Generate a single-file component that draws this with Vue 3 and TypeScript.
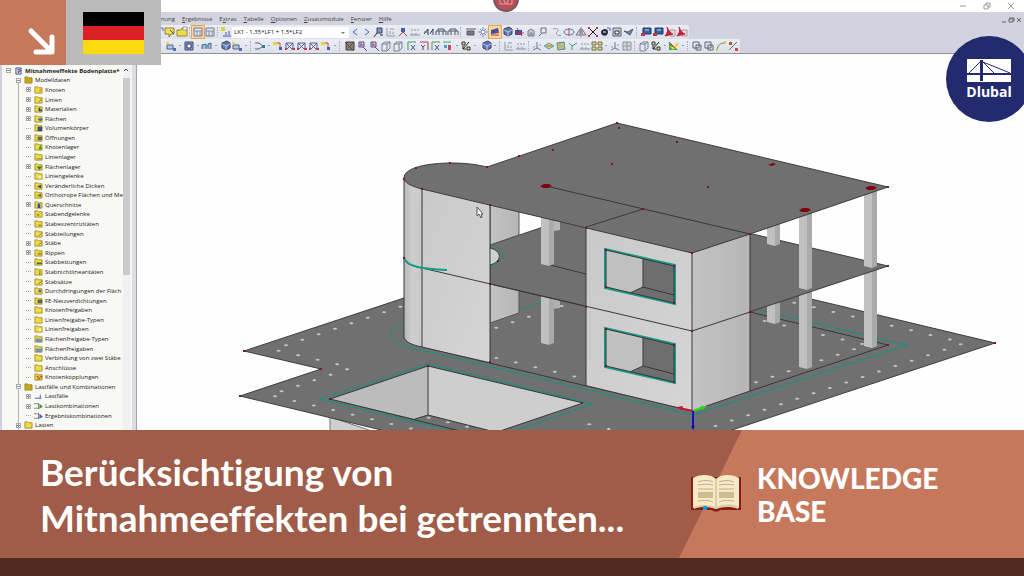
<script setup lang="ts">
interface Shape { d: string; f?: string; s?: string }
interface Tool { kind: 'icon' | 'drop' | 'gap' | 'combo'; name?: string; on?: boolean; size?: string }
interface TreeRow { text: string; level: number; toggle?: string; icon: string; mark?: string; markColor?: string }
interface Pt { x: number; y: number }

const navy = '#3a4a7c'
const glyphs: Record<string, Shape[]> = {
  note: [{ d: 'M1 2h9v6H7l-2 3V8H1z', f: '#f3e05a', s: '#8b8330' }, { d: 'M6 4l4 4', s: '#555' }],
  folder: [{ d: 'M1 4h4l1-2h5v8H1z', f: '#eedb4e', s: '#978831' }, { d: 'M7 1h4v3H7z', f: '#fff', s: '#999' }],
  table: [{ d: 'M2 2h8v8H2z', f: '#dfe3ee', s: '#71788c' }, { d: 'M2 5h8M5 5v5M8 5v5', s: '#8a91a3' }],
  load: [{ d: 'M1 1h4v4H1z', f: '#d9d33c' }, { d: 'M3 10h8M6 6v3M9 5v4', s: '#4a5a96' }],
  prev: [{ d: 'M8 3L4 6l4 3', s: '#3866b8' }],
  next: [{ d: 'M4 3l4 3-4 3', s: '#3866b8' }],
  lens: [{ d: 'M4 2h5v5H4z', f: '#8592bd', s: '#3c4568' }, { d: 'M4 7l-3 4M7 9h3', s: '#333' }],
  dim: [{ d: 'M2 2v8h8M5 8V5M8 8V6M5 3h4', s: '#9298a8' }],
  person: [{ d: 'M4 2h4v4H4z', f: '#4b5ba0' }, { d: 'M2 10l4-4 4 4', s: '#a53d52' }],
  values: [{ d: 'M1 9h10M2 4h2M5 4h2M8 4h2M3 7v2M7 7v2', s: '#8d93a4' }],
  pair: [{ d: 'M1 8l4-5v6M7 8l3-5v6', s: '#333f55' }, { d: 'M1 6h4', s: '#487b57' }],
  frame: [{ d: 'M1 9V5h10v4M3 5V3h6v2M4 5v4M8 5v4', s: '#4e5669' }],
  texture: [{ d: 'M2 2h8v8H2z', f: '#8b8072', s: '#3d3a3a' }, { d: 'M1 2l9 9M10 2l-6 6', s: '#5c4b44' }],
  flag: [{ d: 'M1 3h10M2 5h7v4H2z', f: '#777', s: '#585d68' }],
  gear: [{ d: 'M6 1v10M1 6h10M3 3l6 6M9 3l-6 6', s: '#7984b5' }, { d: 'M5 5h2v2H5z', f: '#fff' }],
  red: [{ d: 'M2 4l7-2 1 5-8 1z', f: '#394f9c' }, { d: 'M2 9h8', s: '#ca3445' }, { d: 'M5 3l4 4', s: '#d0394a' }],
  cube: [{ d: 'M3 3l5-2 3 2v5l-4 2-4-2z', f: '#6177ad', s: '#34415f' }, { d: 'M3 4l4 2 4-2M7 6v4', s: '#b8c8e6' }],
  cross: [{ d: 'M2 4h7v5H2z', f: '#3953a5' }, { d: 'M4 2l5 8M3 7h8', s: '#c22c41' }],
  house: [{ d: 'M3 10V5l3-2 3 2v5zM5 10V7h2v3', f: '#c6c9d2', s: '#777c89' }],
  search: [{ d: 'M4 2h5v5H4zM5 7l-3 3', f: '#e5e8ef', s: '#687187' }],
  link: [{ d: 'M2 3c5-2 6 2 4 3s1 5 4 3', s: '#8b93a2' }],
  orbit: [{ d: 'M1 6c1-4 9-4 10 0-1 4-9 4-10 0', s: '#5e6bad' }, { d: 'M6 2v8', s: '#bc4c61' }],
  tri: [{ d: 'M1 9l4-6v6zM7 9V3l4 6z', f: '#d6d8df', s: '#727987' }, { d: 'M6 1v10', s: '#a66' }],
  cut: [{ d: 'M2 2l8 8M10 2l-8 8', s: '#222' }, { d: 'M1 1h2v2H1zM9 1h2v2H9zM1 9h2v2H1zM9 9h2v2H9z', f: '#d02d47' }],
  disc: [{ d: 'M2 6c0-3 7-5 7 0s-7 5-7 0', f: '#20283c' }, { d: 'M4 6h3', s: '#fff' }, { d: 'M8 2h3v3', s: '#5061b5' }],
  ring: [{ d: 'M2 2h8v8H2z', f: '#ccd1dd', s: '#59606f' }, { d: 'M4 5h4v3H4z', f: '#fff', s: '#252c3b' }],
  wing: [{ d: 'M1 5l4 1 5-3-3 6-3-2z', f: '#7288b9', s: '#485978' }],
  screen: [{ d: 'M3 2h8v6H3z', f: '#335e98', s: '#1d3d6f' }, { d: 'M1 7h4v3H1z', f: '#c83246' }, { d: 'M5 4h4', s: '#cfe2f8' }],
  pdf: [{ d: 'M6 4h5v6H6z', f: '#eadfe2', s: '#b48b92' }, { d: 'M1 10c3-4 3-6 2-9 2 4 3 6 6 7z', f: '#bf2438', s: '#bf2438' }],
  axis: [{ d: 'M6 2v6l4 2M6 8l-4 2', s: '#6b7894' }, { d: 'M2 7h2M8 5h2', s: '#93a3c6' }],
  greenaxis: [{ d: 'M2 2v8M2 2h8', s: '#36a152' }, { d: 'M5 5l4 5M9 5l-4 5', s: '#44518f' }],
  redaxis: [{ d: 'M2 2h8v8', s: '#c73449' }, { d: 'M3 5l2 2v3M7 5l-2 2', s: '#44518f' }],
  truss: [{ d: 'M2 10V3l7 7V3L2 10M2 3h7', s: '#556094' }, { d: 'M1 8h2v2H1zM8 8h3v2H8z', f: '#b44455' }],
  node: [{ d: 'M2 5h6v4H2z', f: '#b9c7df', s: '#506083' }, { d: 'M1 2h3v2H1z', f: '#dfda4c' }, { d: 'M8 8h3v3H8z', f: '#516ab2' }],
  window: [{ d: 'M2 2h8v8H2z', f: '#8c9bcc', s: '#3f4a72' }, { d: 'M4 4h4v4H4z', f: '#fff', s: '#26346e' }],
  member: [{ d: 'M1 9V5l4-1v5M7 9V4l3-1v6', f: '#a7bfd6', s: '#4a6485' }, { d: 'M5 5h2v2H5z', f: '#4ea6ac' }],
  branch: [{ d: 'M1 3h4l4 3-4 3H1', s: '#54657f' }, { d: 'M8 5h3v3H8z', f: '#3d7a98' }],
  pin: [{ d: 'M3 3h5v6', s: '#c54052' }, { d: 'M1 2h4v3H1z', f: '#e0d537' }, { d: 'M7 7h3v3H7z', f: '#4d5fa8' }],
  zoom: [{ d: 'M3 2h5v5H3zM7 7l4 4', f: '#d5d9ed', s: '#495789' }, { d: 'M5 2v4M4 5h4', s: '#c83b4d' }],
  box: [{ d: 'M2 4l3-2h5v6l-3 3H2zM2 4h5v6M7 4l3-2', f: '#e5e8ee', s: '#7b8191' }],
  multi: [{ d: 'M1 2h8', s: '#45a75d' }, { d: 'M2 5h3v3H2z', f: '#48a1c0' }, { d: 'M6 5h3v5H6z', f: '#c44b5d' }],
  arrows: [{ d: 'M2 2h3v3H2zM7 7h3v3H7z', f: '#e3df72', s: '#333' }, { d: 'M9 2L3 9M3 6v3h3', s: '#222' }],
  mesh: [{ d: 'M2 3l7-1 1 7-7 1z', f: '#a2c9b2', s: '#538a70' }, { d: 'M5 3v7M2 6h8', s: '#e0a44c' }],
  grid: [{ d: 'M1 2h4v3H1zM7 2h4v3H7zM1 7h4v3H1zM7 7h4v3H7z', f: '#e4df81', s: '#6e6d45' }],
  greygrid: [{ d: 'M2 2h8v8H2zM2 6h8M6 2v8', f: '#d3d8df', s: '#9098a3' }],
  rainbow: [{ d: 'M1 6l5-3 5 3-5 3z', f: '#d8d56a', s: '#4aa7c4' }, { d: 'M3 6h6', s: '#cf6b4a' }],
  fork: [{ d: 'M5 10V5M2 3l3 3 5-3', s: '#4e9a6b' }],
  result: [{ d: 'M1 2l9 8H1z', f: '#39a449' }, { d: 'M1 6l4 1 5-5 1 2-6 6z', f: '#e4d838' }, { d: 'M1 2l6 6', s: '#ce2a3c' }],
  copy: [{ d: 'M2 2h6v6H2zM5 5h5v5H5z', f: '#e2e4ec', s: '#5d6577' }],
  curve: [{ d: 'M2 10c1-5 3-7 8-7', s: '#6a823b' }, { d: 'M1 9h2v2H1zM9 1h2v2H9z', f: '#c4d435' }],
  percent: [{ d: 'M2 10l8-8', s: '#3f8056' }, { d: 'M2 2h3v3H2zM8 8h3v3H8z', f: '#cc4b43' }],
}

const gap = (size: string): Tool => ({ kind: 'gap', size })
function icons(list: string): Tool[] {
  return list.split(' ').map((n) => {
    if (n === 'v') return { kind: 'drop' }
    return n.endsWith('!') ? { kind: 'icon', name: n.slice(0, -1), on: true } : { kind: 'icon', name: n }
  })
}
const barOne: Tool[] = [
  ...icons('disc note folder'), gap('s'), ...icons('table! table'), gap('s'), ...icons('load'),
  { kind: 'combo' }, ...icons('prev next lens dim person values'), gap('xs'), ...icons('pair frame frame'), gap('l'),
  ...icons('flag gear red! cube cross house search'), gap('xs'), ...icons('link orbit tri cut disc ring wing'), gap('m'),
  ...icons('screen screen pdf pdf'),
]
const barTwo: Tool[] = [
  ...icons('node v window v member v cube node v'), gap('m'),
  ...icons('branch v pin truss truss truss pin v'), gap('l'),
  ...icons('texture zoom zoom box box'), gap('xs'), ...icons('greenaxis redaxis greenaxis multi v arrows v'), gap('xs'),
  ...icons('cube v'), gap('m'), ...icons('dim values'), gap('s'),
  ...icons('axis rainbow mesh fork values grid v axis greygrid'), gap('m'), ...icons('box arrows v result v'), gap('m'),
  ...icons('copy copy curve percent'),
]
const bars = [barOne, barTwo]
const menus = ['Berechnung', 'Ergebnisse', 'Extras', 'Tabelle', 'Optionen', 'Zusatzmodule', 'Fenster', 'Hilfe']
const accel: Record<string, number> = { Ergebnisse: 0, Extras: 1, Tabelle: 0, Optionen: 0, Zusatzmodule: 0, Fenster: 0, Hilfe: 0, Berechnung: 0 }

const leaf = (text: string, toggle = '', mark = '', markColor = navy): TreeRow => ({ text, level: 2, toggle, icon: 'folder', mark, markColor })
const tree: TreeRow[] = [
  { text: 'Mitnahmeeffekte Bodenplatte*', level: 0, toggle: '-', icon: 'model' },
  { text: 'Modelldaten', level: 1, toggle: '-', icon: 'full' },
  leaf('Knoten', '+', 'M6 4h2v2H6z', '#c9892c'), leaf('Linien', '+', 'M5 7l4-4', '#8a6a20'),
  leaf('Materialien', '+', 'M5 3h2v2h2v2H5z'), leaf('Flächen', '+', 'M4 5l3-2 3 2-3 2z', '#4d6ea5'),
  leaf('Volumenkörper', '', 'M4 3h5v5H4z'), leaf('Öffnungen', '+', 'M4 3h5v4H4z', '#686a58'),
  leaf('Knotenlager', '', 'M5 7l2-5 2 5z', '#2f9746'), leaf('Linienlager', '', 'M3 6h6v1H3z', '#768846'),
  leaf('Flächenlager', '+', 'M3 4h6L6 8z', '#297a3f'), leaf('Liniengelenke', '', 'M5 4h3v3H5z', '#f5efb0'),
  leaf('Veränderliche Dicken', '', 'M3 5l5-2v4z'), leaf('Orthotrope Flächen und Me', '', 'M3 5l5-2v4z', '#6d743d'),
  leaf('Querschnitte', '+', 'M4 3h3v5H4z', '#334da6'), leaf('Stabendgelenke', '', 'M3 5h3v1H3z', '#445'),
  leaf('Stabexzentrizitäten', '', 'M5 5h3v2H5z', '#a4902e'), leaf('Stabteilungen', '', 'M5 7l4-4', '#867025'),
  leaf('Stäbe', '+', 'M5 7l4-4', '#867025'), leaf('Rippen', '+', 'M4 4h5v3H4z', '#b19b35'),
  leaf('Stabbettungen', '', 'M3 5h6v2H3z', '#38753d'), leaf('Stabnichtlinearitäten', '', 'M6 3h1v5H6z', '#75651f'),
  leaf('Stabsätze', '', 'M5 7l4-4', '#75651f'), leaf('Durchdringungen der Fläch', '', 'M5 3h3v3H5z', '#506bad'),
  leaf('FE-Netzverdichtungen', '', 'M4 3h5v4H4z', '#52655c'), leaf('Knotenfreigaben'), leaf('Linienfreigabe-Typen'),
  leaf('Linienfreigaben', '', 'M5 4h3v3H5z', '#f5efb0'), leaf('Flächenfreigabe-Typen', '', 'M2 4h7v4H2z', '#6f94b5'),
  leaf('Flächenfreigaben', '', 'M2 4h7v4H2z', '#6f94b5'), leaf('Verbindung von zwei Stäbe'), leaf('Anschlüsse'),
  leaf('Knotenkopplungen', '', 'M3 3h2v2H3zM7 3h2v2H7zM5 5h2v2H5zM3 7h2v1H3z', '#c13f2d'),
  { text: 'Lastfälle und Kombinationen', level: 1, toggle: '-', icon: 'full' },
  { text: 'Lastfälle', level: 2, toggle: '+', icon: 'case' },
  { text: 'Lastkombinationen', level: 2, toggle: '+', icon: 'combi', markColor: '#2d9b44' },
  { text: 'Ergebniskombinationen', level: 2, icon: 'combi', markColor: '#4a61b5' },
  { text: 'Lasten', level: 1, toggle: '+', icon: 'folder' },
]

function row(x: number, y: number, dx: number, dy: number, n: number): Pt[] {
  return Array.from({ length: n }, (_, i) => ({ x: x + i * dx, y: y + i * dy }))
}
const marks: Pt[] = [
  ...row(286, 345.3, 16.35, -5.5, 8), ...row(278.7, 350.7, 19.45, 4.55, 4), ...row(347, 369.3, -16.35, 5.5, 5),
  ...row(275, 396.3, 19.4, 4.6, 8), ...row(496.3, 327.7, 16.3, -5.5, 3), ...row(561.7, 306, 16, -5, 1),
  ...row(496.3, 358, 19.5, 4.6, 5), ...row(794.3, 302.7, 19.5, 4.6, 4), ...row(891.7, 325.7, 19.4, 4.6, 4),
  ...row(960.7, 344.3, -16.35, 5.45, 16), ...row(764.7, 321, 19.4, 4.6, 2), ...row(823, 335, 19.5, 4.5, 3),
  ...row(854, 349.3, -16.3, 5.5, 3), ...row(788.7, 371.3, -16.3, 5.5, 3), ...row(589.3, 424.3, 19.3, 4.6, 2),
]
const pitMarks: Pt[] = row(428.7, 417.7, 19.2, 4.5, 3)
const nodes: Pt[] = [
  [617, 123], [619, 128], [677, 142], [553, 150], [519, 156], [612, 164], [708, 187], [450, 163], [416, 168], [404, 179],
  [487, 167], [422, 189], [490, 205], [586, 228], [643, 209], [692, 253], [750, 234], [888, 187], [888, 266], [888, 345],
  [995, 343], [244, 351], [321, 369], [240, 396], [490, 284], [490, 362], [586, 307], [692, 331], [750, 312], [404, 258],
  [606, 250], [674, 266], [606, 287], [674, 303], [606, 329], [674, 345], [606, 366], [674, 382], [330, 399], [428, 366], [582, 403], [498, 261],
].map(([x, y]) => ({ x: x!, y: y! }))
const supports: Pt[] = [{ x: 546, y: 186 }, { x: 871, y: 188 }, { x: 805, y: 210 }]
const lowerColumns = [[541, 270, 344], [767, 270, 323], [799, 270, 368], [864, 262, 347]]
const upperColumns = [[541, 200, 265], [767, 205, 245], [799, 205, 289], [864, 186, 267]]
</script>

<template>
  <main class="slide">
    <section class="app">
      <header class="titlebar">
        <button type="button" aria-label="Minimieren"><svg viewBox="0 0 8 8"><path d="M1 4h6" /></svg></button>
        <button type="button" aria-label="Verkleinern"><svg viewBox="0 0 8 8"><path d="M1 3h4v4H1zM3 3V1h4v4H5" /></svg></button>
        <button type="button" aria-label="Schließen"><svg viewBox="0 0 8 8"><path d="M1 1l6 6M7 1L1 7" /></svg></button>
      </header>
      <nav class="menubar">
        <button v-for="m in menus" :key="m" type="button">{{ m.slice(0, accel[m]) }}<u>{{ m.charAt(accel[m]!) }}</u>{{ m.slice(accel[m]! + 1) }}</button>
        <svg class="mdi" viewBox="0 0 22 8"><path d="M1 6h4M8 3h4v3H8zM8 2h5v3M16 2l4 4M20 2l-4 4" /></svg>
      </nav>
      <div class="bars">
        <div v-for="(bar, b) in bars" :key="b" class="bar" :class="{ second: b === 1 }">
          <template v-for="(t, i) in bar" :key="i">
            <button v-if="t.kind === 'icon'" type="button" class="tool" :class="{ on: t.on }" :aria-label="t.name">
              <svg viewBox="0 0 12 12"><path v-for="(s, k) in glyphs[t.name!]" :key="k" :d="s.d" :fill="s.f || 'none'" :stroke="s.s || 'none'" /></svg>
            </button>
            <span v-else-if="t.kind === 'drop'" class="drop"></span>
            <span v-else-if="t.kind === 'gap'" class="gap" :class="t.size"></span>
            <label v-else class="combo">
              <select aria-label="Lastkombination"><option>LK1 - 1.35*LF1 + 1.5*LF2</option></select>
            </label>
          </template>
        </div>
      </div>

      <div class="work">
        <aside class="tree">
          <ul>
            <li v-for="(r, i) in tree" :key="i" :class="'l' + r.level">
              <button v-if="r.toggle" type="button" class="toggle" :aria-label="r.text">
                <svg viewBox="0 0 5 5"><path d="M1 2h3v1H1z" /><path v-if="r.toggle === '+'" d="M2 1h1v3H2z" /></svg>
              </button>
              <span v-else class="stub"></span>
              <svg class="ico" viewBox="0 0 10 9">
                <template v-if="r.icon === 'folder' || r.icon === 'full'">
                  <path d="M1 1h3l1 1h4v6H1z" :fill="r.icon === 'full' ? '#c5a820' : '#eedb45'" stroke="#a08d27" stroke-width="1" />
                  <path v-if="r.mark" :d="r.mark" :fill="r.markColor" :stroke="r.mark.includes('l4-4') ? r.markColor : 'none'" />
                </template>
                <path v-else-if="r.icon === 'model'" d="M2 1h6v7H2zM4 3h3v2H5v2" fill="#c9cbe0" stroke="#50547e" />
                <path v-else-if="r.icon === 'case'" d="M1 7h7M7 3v4" fill="none" stroke="#3c4cae" />
                <template v-else>
                  <path d="M0 2h5M0 7h5M5 1v7" fill="none" stroke="#777" />
                  <path d="M6 2l4 3-4 3z" :fill="r.markColor" />
                </template>
              </svg>
              <span class="name">{{ r.text }}</span>
            </li>
          </ul>
          <div class="scroll"><svg viewBox="0 0 7 8"><path d="M1 5l2-2 2 2" /></svg><i></i></div>
        </aside>

        <svg class="scene" viewBox="137 54 887 376" preserveAspectRatio="xMinYMin slice">
          <defs>
            <linearGradient id="round"><stop offset="0" stop-color="#b9b9b9" /><stop offset=".5" stop-color="#cecece" /><stop offset="1" stop-color="#c8c8c8" /></linearGradient>
            <linearGradient id="front" x1="0" y1="0" x2="1" y2="1"><stop offset="0" stop-color="#c9c9c9" /><stop offset="1" stop-color="#d5d5d5" /></linearGradient>
            <linearGradient id="side"><stop offset="0" stop-color="#c3c3c3" /><stop offset="1" stop-color="#b6b6b6" /></linearGradient>
          </defs>
          <path fill="#cfcfcf" stroke="#777" d="M330 417v20h60z" />
          <path class="slab" d="M244 351L573 242 995 343 720 434H398L240 396 321 369z" />
          <ellipse v-for="(p, i) in marks" :key="'m' + i" :cx="p.x" :cy="p.y" rx="2" ry="1" fill="#c6c6c6" />
          <path class="edge" d="M750 312L888 345 750 391" />
          <path class="teal" d="M404 325C394 328 391 331 391 335C391 344 406 347 420 350L693 415 907 345 750 308M519 310L545 301" />

          <path fill="#bcbcbc" d="M330 399L428 366V415L415 419z" />
          <path fill="#cecece" d="M428 366L583 403 500 431H491L428 415z" />
          <path class="edge" d="M460 431L330 399 428 366 583 403 500 431M428 366V415L491 431M428 415L415 419" />
          <path class="teal" d="M453 431L320 399 428 364 593 404 513 431" />
          <ellipse v-for="(p, i) in pitMarks" :key="'p' + i" :cx="p.x" :cy="p.y" rx="2" ry="1" fill="#c6c6c6" />

          <path fill="#b1b1b1" d="M550 290h10v18l-7 1z" />
          <g v-for="(c, i) in lowerColumns" :key="'c' + i">
            <path fill="#c0c0c0" :d="`M${c[0]} ${c[1]}h8V${c[2]! + 1}l-8 -2z`" />
            <path fill="#aaa" :d="`M${c[0]! + 8} ${c[1]}h5V${c[2]! - 1}l-5 2z`" />
          </g>
          <path fill="url(#side)" class="thin" d="M490 280L519 290V313L490 323z" />
          <path class="slab" d="M490 245L617 202 888 266 692 331 490 284z" />
          <path fill="#cfcfcf" d="M490 248C503 251 502 262 490 265z" />
          <path class="edge" d="M490 248C503 251 502 262 490 265M550 265L586 274" />
          <path class="teal" d="M490 244C507 250 508 260 490 266" />
          <path fill="#b7b7b7" d="M550 215h10v15l-7 1z" />
          <g v-for="(c, i) in upperColumns" :key="'u' + i">
            <path fill="#c0c0c0" :d="`M${c[0]} ${c[1]}h8V${c[2]! + 1}l-8 -2z`" />
            <path fill="#aaa" :d="`M${c[0]! + 8} ${c[1]}h5V${c[2]! - 1}l-5 2z`" />
          </g>
          <path fill="url(#side)" class="thin" d="M490 200L519 208V235L490 245z" />

          <path fill="url(#round)" d="M404 178V337C405 342 412 345 422 347V188z" />
          <path fill="url(#front)" d="M422 188L490 204V362L422 347z" />
          <path fill="url(#front)" d="M586 227L692 253V411L586 385z" />
          <path fill="url(#side)" d="M692 253L750 234V391L692 411z" />
          <path class="slab" d="M422 189C410 186 404 182 404 178C404 167 430 163 452 163C468 163 478 165 487 167L617 123 888 187 750 234 692 253z" />
          <path class="edge" d="M404 178V337C405 342 412 345 422 347L692 411 750 391V234M422 189V347M490 205V362M586 227V385M692 253V411M546 186L750 234M586 227L643 209M404 258C405 264 412 266 422 268L692 331 750 312" />
          <path class="teal strong" d="M404 258C407 267 424 269 447 270" />

          <g v-for="dy in [0, 79]" :key="dy" :transform="`translate(0 ${dy})`">
            <path fill="#c0c0c0" d="M605 249L675 265V304L605 288z" />
            <path fill="#6e6e6e" d="M643 258L675 265V304L630 293 643 287z" />
            <path class="edge" d="M643 258V287L630 293M643 287L674 295" />
            <path class="teal strong" d="M605 249L675 265V304L605 288z" />
            <path class="edge" d="M606 250L674 266V303L606 287z" />
          </g>

          <rect v-for="(p, i) in nodes" :key="'n' + i" :x="p.x - 1" :y="p.y - 1" width="2" height="2" fill="#7c1230" />
          <path v-for="(p, i) in supports" :key="'s' + i" :transform="`translate(${p.x} ${p.y})`" fill="#83000f" d="M-6 0L-2 -2H3L6 0 2 2H-3z" />
          <path fill="#83000f" d="M768 165l5-2 3 1-4 2z" />
          <g fill="none">
            <path stroke="#d01025" stroke-width="2" d="M693 411l-14-3" />
            <path fill="#d01025" d="M677 407l6-1-1 4z" />
            <path stroke="#1fe01f" stroke-width="2" d="M693 411l11-4" />
            <path fill="#1fe01f" d="M707 406l-6 0 1 4z" />
            <path stroke="#1010c0" stroke-width="2" d="M693 411v18" />
            <path fill="#1010c0" d="M691 426h4l-2 4z" />
          </g>
          <path fill="#fff" stroke="#555" stroke-width="1" d="M477 207v9l2-2 2 4 1-1-1-3h2z" />
        </svg>
      </div>
    </section>

    <section class="banner">
      <h1>Berücksichtigung von<br />Mitnahmeeffekten bei getrennten...</h1>
      <div class="category">
        <svg class="book" viewBox="0 0 50 38">
          <path fill="#8d1b16" d="M0 2h50v33H29c-2 2-6 2-8 0H0z" />
          <path fill="#f7e9c7" d="M2 3C9-1 20-1 25 4C30-1 41-1 48 3V33C40 31 31 31 25 34C19 31 10 31 2 33z" />
          <path fill="#ddcda5" d="M24 4h2v29h-2zM3 32c8-3 17-2 21 0l1 2c-6-2-15-3-22 0zM26 32c5-3 14-3 21-1v3c-8-3-16-2-22 0z" />
          <path fill="#cdbd93" d="M7 17h15v6H7zM28 17h15v6H28z" />
          <path fill="none" stroke="#bfae84" d="M7 7c4-2 11-2 15 0M7 10c4-1 11-1 15 0M7 14h15M7 26c5-1 10-1 15 1M28 7c5-2 11-2 15 0M28 10c5-1 10-1 15 0M28 14h15M28 27c5-2 10-2 15-1" />
          <path fill="#1399d6" d="M12 31h4v4h-4z" />
        </svg>
        <h2>KNOWLEDGE<br />BASE</h2>
      </div>
    </section>
    <footer class="strip"></footer>

    <div class="corner">
      <svg class="arrow" viewBox="0 0 66 65"><path d="M31 31L51 51M52 37V52H36" /></svg>
      <div class="lang"><svg viewBox="0 0 61 42"><path d="M0 0h61v14H0z" /><path fill="#dc2027" d="M0 14h61v14H0z" /><path fill="#f9d90f" d="M0 28h61v14H0z" /></svg></div>
    </div>
    <svg class="record" viewBox="0 0 26 13"><circle cx="13" cy="-1" r="12" fill="#b94e5b" stroke="#77585c" stroke-width="2" /><path fill="none" stroke="#e6a4ab" d="M7 0v4h12V0" /><circle cx="13" cy="1" r="2" fill="none" stroke="#e6a4ab" /></svg>
    <div class="logo">
      <svg viewBox="0 0 44 23">
        <path fill="#fff" d="M0 0h44v23H0z" />
        <path fill="#232a6e" d="M0 14h44v2H0zM13 1h3v21h-3z" />
        <path fill="none" stroke="#232a6e" d="M13 3L2 14M16 3l11 11M16 3l27 11" />
      </svg>
      <strong>Dlubal</strong>
    </div>
  </main>
</template>

<style>
body { margin: 0; }
</style>

<style scoped>
* { box-sizing: border-box; }
.slide { position: relative; display: flex; flex-direction: column; height: 100vh; overflow: hidden; font-family: "Open Sans", "Noto Sans", sans-serif; background: #fff; }
button { border: 0; padding: 0; margin: 0; background: none; font: inherit; color: inherit; }
svg { display: block; }
.app { flex: 1; min-height: 0; display: flex; flex-direction: column; }
.titlebar { height: 12px; flex: none; display: flex; justify-content: flex-end; align-items: center; gap: 16px; padding-right: 9px; }
.titlebar svg { width: 8px; height: 8px; fill: none; stroke: #999; stroke-width: 1; }
.menubar { height: 13px; flex: none; display: flex; align-items: center; gap: 7px; padding-left: 141px; background: #d3d3df; font-size: 6px; line-height: 12px; color: #444; }
.menubar u { text-decoration-thickness: 1px; text-underline-offset: 1px; }
.mdi { width: 22px; height: 8px; margin: 2px 1px 0 auto; fill: none; stroke: #666; }
.bars { flex: none; background: #d3d3df; border-bottom: 1px solid #929292; }
.bar { display: flex; align-items: center; width: fit-content; height: 14px; padding: 0 1px 0 152px; background: linear-gradient(#eceef5, #dcdfe9); border-radius: 0 2px 2px 0; }
.bar.second { padding-left: 165px; }
.tool { width: 12px; height: 12px; flex: none; display: grid; place-items: center; }
.tool svg { width: 12px; height: 12px; }
.tool.on { background: #fbd79c; box-shadow: 0 0 0 1px #e0a75c; }
.drop { width: 6px; flex: none; display: grid; place-items: center; }
.drop::after { content: ""; border: 1px solid transparent; border-top-color: #555; }
.gap { flex: none; height: 10px; border-left: 1px dotted #aab; margin-left: 1px; }
.gap.xs { width: 1px; border-color: transparent; }
.gap.s { width: 3px; }
.gap.m { width: 4px; }
.gap.l { width: 5px; }
.combo { position: relative; width: 117px; height: 11px; background: #fff; }
.combo select { appearance: none; display: block; border: 0; width: 100%; height: 11px; padding: 0 0 0 2px; margin: 0; background: transparent; font: 6px/11px "Open Sans", sans-serif; color: #111; }
.combo::after { content: ""; position: absolute; right: 4px; top: 5px; border: 2px solid transparent; border-top-color: #777; }
.work { flex: 1; min-height: 0; display: flex; }
.tree { width: 137px; flex: none; display: flex; padding-top: 12px; background: #f8f8f5; border-left: 2px solid #cfd0dd; border-right: 1px solid #a4a4a8; box-shadow: inset -4px 0 #dcdce4; }
.tree ul { list-style: none; margin: 0; padding: 0; width: 121px; display: flex; flex-direction: column; overflow: hidden; background: linear-gradient(#b5b5b5, #b5b5b5) 16px 14px / 1px 100% no-repeat; }
.tree li { flex: 1; min-height: 0; display: flex; align-items: center; font-size: 6px; line-height: 8px; color: #222; white-space: nowrap; }
.l0 { padding-left: 4px; font-weight: 700; }
.l1 { padding-left: 14px; }
.l2 { padding-left: 24px; }
.toggle { width: 5px; height: 5px; flex: none; background: #fff; outline: 1px solid #aaa; outline-offset: -1px; }
.toggle svg { width: 5px; height: 5px; fill: #889; }
.stub { width: 5px; height: 1px; flex: none; border-top: 1px dotted #aaa; }
.ico { width: 9px; height: 8px; flex: none; margin: 0 2px 0 3px; overflow: visible; }
.scroll { width: 8px; flex: none; background: #f0f0f0; }
.scroll svg { width: 7px; height: 8px; fill: none; stroke: #444; }
.scroll i { display: block; width: 7px; height: 54%; margin-top: 4px; background: #cacaca; }
.scene { flex: 1; min-width: 0; width: 100%; height: 100%; background: #fefefe; }
.slab { fill: #707070; stroke: #3d3d3d; stroke-width: 1; }
.edge { fill: none; stroke: #383838; stroke-width: 1; }
.thin { stroke: #555; stroke-width: 1; }
.teal { fill: none; stroke: #12937f; stroke-width: 1; }
.teal.strong { stroke: #169c88; stroke-width: 2; }
.banner { flex: none; display: flex; align-items: stretch; justify-content: space-between; height: 128px; background: #9f5c48; color: #fff; font-family: Lato, "Open Sans", sans-serif; }
h1 { margin: 0; padding: 19px 0 0 40px; font-size: 37px; line-height: 46px; font-weight: 700; white-space: nowrap; font-variant-ligatures: none; }
.category { position: relative; isolation: isolate; width: 345px; flex: none; display: flex; align-items: center; gap: 16px; padding-left: 12px; }
.category::before { content: ""; position: absolute; inset: 0; z-index: -1; background: #c6785d; clip-path: polygon(63px 0, 100% 0, 100% 100%, 0 100%); }
.book { width: 50px; height: 38px; flex: none; }
h2 { margin: 0; padding-top: 2px; font-size: 28px; line-height: 33px; font-weight: 900; }
.strip { flex: none; height: 18px; background: #522b20; }
.corner { position: absolute; left: 0; top: 0; display: flex; height: 65px; }
.arrow { width: 66px; height: 65px; background: #c6785d; fill: none; stroke: #fff; stroke-width: 5; stroke-linecap: round; stroke-linejoin: round; }
.lang { width: 95px; display: grid; place-items: center; background: #bbb; }
.lang svg { width: 61px; height: 42px; }
.record { position: absolute; left: 50%; top: 0; width: 26px; height: 13px; margin-left: -19px; }
.logo { position: absolute; right: -8px; top: 36px; width: 86px; height: 86px; border-radius: 50%; background: #232a6e; color: #fff; display: flex; flex-direction: column; align-items: center; padding-top: 23px; }
.logo svg { width: 44px; height: 23px; }
.logo strong { font-size: 14px; line-height: 20px; font-weight: 700; }
</style>
